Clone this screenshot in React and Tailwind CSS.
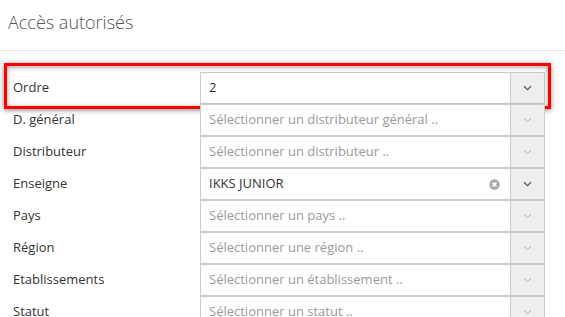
import React from 'react';

const rows = [
  { label: 'Ordre', value: '2', highlighted: true },
  { label: 'D. général', placeholder: 'Sélectionner un distributeur général ..' },
  { label: 'Distributeur', placeholder: 'Sélectionner un distributeur ..' },
  { label: 'Enseigne', value: 'IKKS JUNIOR', clearable: true },
  { label: 'Pays', placeholder: 'Sélectionner un pays ..' },
  { label: 'Région', placeholder: 'Sélectionner une région ..' },
  { label: 'Etablissements', placeholder: 'Sélectionner un établissement ..' },
  { label: 'Statut', placeholder: 'Sélectionner un statut ..' },
];

function Chevron({ dark }) {
  return (
    <svg width="9" height="6" viewBox="0 0 9 6" fill="none">
      <path d="M1 1.2 L4.5 4.6 L8 1.2" stroke={dark ? '#555' : '#c4c4c4'} strokeWidth="1.2" />
    </svg>
  );
}

function ClearIcon() {
  return (
    <svg width="11" height="11" viewBox="0 0 11 11">
      <circle cx="5.5" cy="5.5" r="5.2" fill="#ababab" />
      <path d="M3.6 3.6 L7.4 7.4 M7.4 3.6 L3.6 7.4" stroke="#fff" strokeWidth="1.5" />
    </svg>
  );
}

function SelectRow({ row }) {
  const filled = !!row.value;
  return (
    <div className="relative flex h-8 w-[532px] items-center">
      {row.highlighted && (
        <div className="pointer-events-none absolute -left-[9px] -top-[9px] -right-[6px] -bottom-[5px] border-[3px] border-[#ff0000] shadow-[0_1px_5px_rgba(0,0,0,0.5),inset_0_1px_5px_rgba(0,0,0,0.4)]" />
      )}
      <div className="w-[187px] text-[13px] text-[#333]">{row.label}</div>
      <div className="flex h-8 w-[345px] border border-[#ccc] bg-white">
        <div className="flex flex-1 items-center pl-2 pr-[10px]">
          <span className={`flex-1 text-[13px] ${filled ? 'text-[#333]' : 'text-[#9a9a9a]'}`}>
            {row.value || row.placeholder}
          </span>
          {row.clearable && <ClearIcon />}
        </div>
        <div className="flex w-[34px] items-center justify-center border-l border-[#ccc] bg-[#eee]">
          <Chevron dark={filled} />
        </div>
      </div>
    </div>
  );
}

export default function App() {
  return (
    <div className="min-h-screen overflow-hidden bg-white font-['Open_Sans',sans-serif]">
      <div className="h-[51px] border-b border-[#e5e5e5] px-2 pt-[10px]">
        <h1 className="text-[18px] font-light leading-6 text-[#555]">Accès autorisés</h1>
      </div>

      <div className="pl-[13px] pt-[21px]">
        {rows.map(r => (
          <SelectRow key={r.label} row={r} />
        ))}
      </div>
    </div>
  );
}
